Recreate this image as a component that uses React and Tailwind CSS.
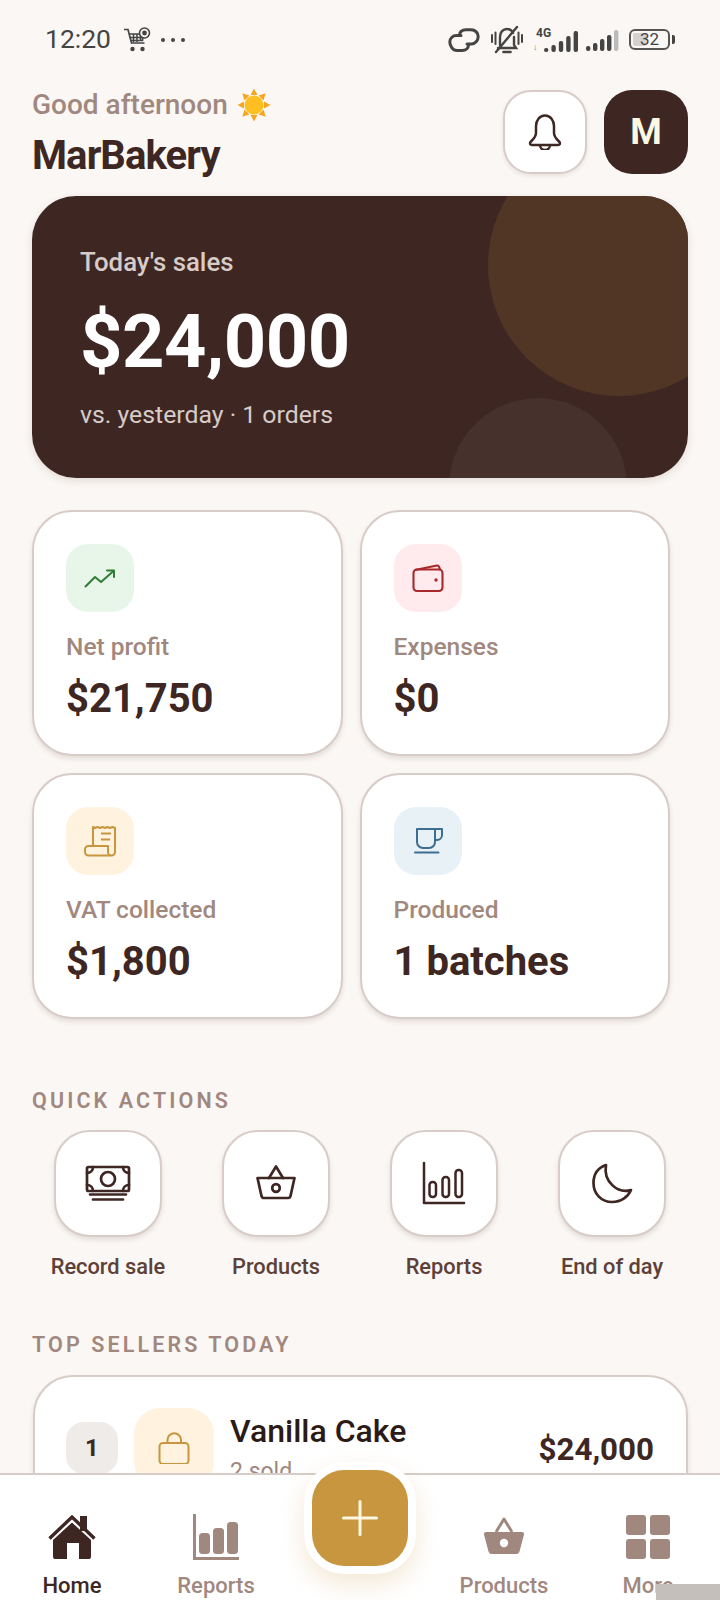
import React from "react";

const ink = "#3e2723";

function Sun() {
  const rays = [0, 45, 90, 135, 180, 225, 270, 315];
  return (
    <svg width="34" height="34" viewBox="0 0 34 34" className="shrink-0">
      {rays.map((r) => (
        <polygon key={r} points="17,0.5 20.5,7 13.5,7" fill="#f6a623" transform={`rotate(${r} 17 17)`} />
      ))}
      <circle cx="17" cy="17" r="9.5" fill="#fdbf22" />
    </svg>
  );
}

function Cart() {
  return (
    <svg width="28" height="26" viewBox="0 0 28 26" fill="none" stroke="#444" strokeWidth="1.7">
      <path d="M1 2.5H5L8.5 16H21.5" />
      <path d="M6 7H20L19.5 13.5H8" />
      <path d="M10.5 7V15M14 7V15M17.5 7V14M6.5 10.5H20" strokeWidth="1.5" />
      <circle cx="9.5" cy="22" r="2.2" fill="#444" stroke="none" />
      <circle cx="19.5" cy="22" r="2.2" fill="#444" stroke="none" />
      <circle cx="21.5" cy="6" r="5" fill="#fbf7f4" strokeWidth="1.6" />
      <circle cx="21.5" cy="6" r="2.4" fill="#444" stroke="none" />
    </svg>
  );
}

function LinkGlyph() {
  return (
    <svg width="32" height="24" viewBox="0 0 32 24" fill="none" stroke="#444" strokeWidth="3" strokeLinecap="round">
      <path d="M13 7.5H8.5C4.5 7.5 1.8 10.5 1.8 14S4.5 22.5 9 22.5H14C18 22.5 20.5 20 20.5 17" />
      <path d="M11.5 7C11.5 4 14 1.8 18 1.8H23C27.5 1.8 30.2 5 30.2 8.5S27.5 16 23.5 16H19" />
    </svg>
  );
}

function BellOff() {
  return (
    <svg width="34" height="30" viewBox="0 0 34 30" fill="none" stroke="#444" strokeWidth="2.4" strokeLinecap="round">
      <path d="M10 20V12C10 7 13 4 17 4C20 4 22 5.5 23 8M24 12V20L26 23H8" />
      <path d="M6 2L27 27" transform="translate(27 0) rotate(0) scale(-1 1) translate(-6 0)" />
      <path d="M13.5 27H20.5" strokeWidth="2.6" />
      <path d="M2 10V17M5.5 7.5V19M28.5 7.5V19M32 10V17" strokeWidth="2" />
    </svg>
  );
}

function Signal({ last = "#444" }) {
  const hs = [5, 8, 12, 16, 21];
  return (
    <svg width="33" height="22" viewBox="0 0 33 22">
      {hs.map((h, i) => (
        <rect key={h} x={i * 7} y={22 - h} width="4.4" height={h} rx="2" fill={i === 4 ? last : "#444"} />
      ))}
    </svg>
  );
}

function Battery() {
  return (
    <div className="flex items-center gap-[2px]">
      <div className="relative flex h-[21px] w-[41px] items-center justify-center overflow-hidden rounded-[6px] border-2 border-[#555]">
        <div className="absolute top-[2px] bottom-[2px] left-[2px] w-[13px] rounded-[2px] bg-[#d4d1cf]" />
        <span className="relative text-[17px] leading-none text-[#444]">32</span>
      </div>
      <div className="h-[9px] w-[3px] rounded-r-[2px] bg-[#444]" />
    </div>
  );
}

function StatusBar() {
  return (
    <div className="flex h-[78px] shrink-0 items-center pt-[1px] pl-[45px] pr-[45px]">
      <span className="text-[26.5px] leading-none text-[#444]">12:20</span>
      <div className="ml-[12px] flex h-[26px] items-center"><Cart /></div>
      <div className="ml-[10px] flex items-center gap-[6px]">
        <span className="h-[4px] w-[4px] rounded-full bg-[#444]" />
        <span className="h-[4px] w-[4px] rounded-full bg-[#444]" />
        <span className="h-[4px] w-[4px] rounded-full bg-[#444]" />
      </div>
      <div className="ml-auto flex items-center">
        <LinkGlyph />
        <div className="ml-[10px]"><BellOff /></div>
        <div className="relative ml-[9px] flex h-[24px] w-[46px] items-end justify-end">
          <span className="absolute top-[-1px] left-[3px] text-[12px] font-bold leading-none text-[#444]">4G</span>
          <div className="absolute bottom-[0px] left-[0px] text-[9px] font-bold leading-none text-[#888]">↓</div>
          <svg width="36" height="22" viewBox="0 0 36 22">
            {[4, 7, 11, 16, 21].map((h, i) => (
              <rect key={h} x={1 + i * 7.4} y={22 - h} width="4.4" height={h} rx="2" fill="#444" />
            ))}
          </svg>
        </div>
        <div className="ml-[7px]"><Signal last="#bbb" /></div>
        <div className="ml-[10px]"><Battery /></div>
      </div>
    </div>
  );
}

function Header() {
  return (
    <div className="flex h-[118px] shrink-0 items-start pl-[32px] pr-[32px] pt-[10px]">
      <div>
        <div className="flex h-[34px] items-center gap-[9px]">
          <span className="text-[28px] font-medium leading-none text-[#a1887f]">Good afternoon</span>
          <Sun />
        </div>
        <div className="mt-[10px] text-[40px] font-bold leading-[48px] tracking-[-0.9px] text-[#3e2723]">MarBakery</div>
      </div>
      <div className="ml-auto flex items-center gap-[17px] pt-[2px]">
        <div className="flex h-[84px] w-[84px] items-center justify-center rounded-[28px] border-2 border-[#d7ccc8] bg-white shadow-[0_2px_4px_rgba(62,39,35,0.1)]">
          <svg width="36" height="36" viewBox="0 0 36 36" fill="none" stroke={ink} strokeWidth="2.5" strokeLinejoin="round">
            <path d="M18 1.5C12.5 1.5 9 6.5 9 12V19C9 23 6 25.5 3.5 28C2.5 29.5 3 31 5 31H31C33 31 33.5 29.5 32.5 28C30 25.5 27 23 27 19V12C27 6.5 23.5 1.5 18 1.5Z" />
            <path d="M13 31A5 5 0 0 0 23 31" />
          </svg>
        </div>
        <div className="flex h-[84px] w-[84px] items-center justify-center rounded-[28px] bg-[#3e2723] text-[36px] font-bold leading-none text-[#fff8e1]">M</div>
      </div>
    </div>
  );
}

function Hero() {
  return (
    <div className="relative ml-[32px] h-[282px] w-[656px] shrink-0 overflow-hidden rounded-[44px] bg-[#3e2723] pl-[48px] pt-[50px] shadow-[0_3px_8px_rgba(62,39,35,0.12)]">
      <div className="absolute left-[456px] top-[-62px] h-[262px] w-[262px] rounded-full bg-[#513626]" />
      <div className="absolute left-[417px] top-[202px] h-[178px] w-[178px] rounded-full bg-[#46312c]" />
      <div className="relative text-[25.8px] font-medium leading-[32px] text-[#d7ccc8]">Today's sales</div>
      <div className="relative mt-[21px] text-[74px] font-bold leading-[86px] tracking-[-0.45px] text-white">$24,000</div>
      <div className="relative mt-[14px] text-[24.8px] leading-[32px] text-[#d7ccc8]">vs. yesterday · 1 orders</div>
    </div>
  );
}

function StatCard({ bg, label, value, icon }) {
  return (
    <div className="h-[246px] rounded-[40px] border-2 border-[#d7ccc8] bg-white pl-[32px] pt-[32px] shadow-[0_3px_5px_rgba(62,39,35,0.12)]">
      <div className={`flex h-[68px] w-[68px] items-center justify-center rounded-[22px] ${bg}`}>{icon}</div>
      <div className="mt-[19px] text-[24.5px] font-medium leading-[32px] text-[#a1887f]">{label}</div>
      <div className="mt-[10px] text-[40px] font-bold leading-[52px] text-[#3e2723]">{value}</div>
    </div>
  );
}

const TrendIcon = (
  <svg width="32" height="32" viewBox="0 0 32 32" fill="none" stroke="#2e7d32" strokeWidth="2" strokeLinecap="round" strokeLinejoin="round">
    <path d="M1.5 24.5L11 15L17 20L29.5 9" />
    <path d="M23 8.5H30V15" />
  </svg>
);
const WalletIcon = (
  <svg width="32" height="32" viewBox="0 0 32 32" fill="none" stroke="#a8282b" strokeWidth="2.1" strokeLinejoin="round">
    <rect x="1.5" y="7.5" width="29" height="21.5" rx="3.5" />
    <path d="M3 8L25 3.5C26.5 3.3 27.5 5 28 7.5" />
    <circle cx="24" cy="18" r="1.7" fill="#a8282b" stroke="none" />
  </svg>
);
const ReceiptIcon = (
  <svg width="32" height="32" viewBox="0 0 32 32" fill="none" stroke="#c8963e" strokeWidth="2" strokeLinejoin="round">
    <path d="M9 21V2L11 3L13.5 2L16 3L18.5 2L21 3L23.5 2L26 3L28.5 2L31 3V27A3.5 3.5 0 0 1 24 27V21H4.5A3.5 3.5 0 0 0 1 24.5V27A3.5 3.5 0 0 0 4.5 30.5H27.5" />
    <path d="M17 8.5H27M17 14.5H26" />
  </svg>
);
const CupIcon = (
  <svg width="32" height="32" viewBox="0 0 32 32" fill="none" stroke="#3c6e91" strokeWidth="2" strokeLinecap="round" strokeLinejoin="round">
    <path d="M5 4H23V17A6 6 0 0 1 17 23H11A6 6 0 0 1 5 17Z" />
    <path d="M23 4H30V10A5 5 0 0 1 25 15H23" />
    <path d="M3 27.5H26.5" />
  </svg>
);

function MoneyIcon() {
  return (
    <svg width="48" height="48" viewBox="0 0 48 48" fill="none" stroke={ink} strokeWidth="2.7" strokeLinecap="round" strokeLinejoin="round">
      <rect x="3" y="7" width="42" height="24" rx="1.5" />
      <circle cx="24" cy="19" r="7" />
      <path d="M3 13C6.5 13 9 10.5 9 7M45 13C41.5 13 39 10.5 39 7M3 25C6.5 25 9 27.5 9 31M45 25C41.5 25 39 27.5 39 31" />
      <path d="M6 34.5H42M9 39.5H39" />
    </svg>
  );
}
function BasketIcon() {
  return (
    <svg width="48" height="48" viewBox="0 0 48 48" fill="none" stroke={ink} strokeWidth="2.7" strokeLinecap="round" strokeLinejoin="round">
      <path d="M17 18L24 6.5L31 18" />
      <path d="M5.5 18H42.5L38.5 36A2.5 2.5 0 0 1 36 38H12A2.5 2.5 0 0 1 9.5 36Z" />
      <circle cx="24" cy="28" r="3.8" />
    </svg>
  );
}
function ChartIcon() {
  return (
    <svg width="48" height="48" viewBox="0 0 48 48" fill="none" stroke={ink} strokeWidth="2.5" strokeLinecap="round" strokeLinejoin="round">
      <path d="M4 3V43H44" />
      <rect x="9.5" y="22" width="6.5" height="15" rx="3" />
      <rect x="22.5" y="17" width="6.5" height="20" rx="3" />
      <rect x="35.5" y="10" width="6.5" height="27" rx="3" />
    </svg>
  );
}
function MoonIcon() {
  return (
    <svg width="48" height="48" viewBox="0 0 48 48" fill="none" stroke={ink} strokeWidth="2.7" strokeLinejoin="round">
      <path d="M18 5C9.5 8 5.5 15 5.5 23C5.5 34 13.5 42 24 42C33 42 40 37 43 30C30 34 15 22 18 5Z" />
    </svg>
  );
}

function QuickAction({ icon, label }) {
  return (
    <div className="flex flex-col items-center">
      <div className="flex h-[107px] w-[108px] items-center justify-center rounded-[36px] border-2 border-[#d7ccc8] bg-white shadow-[0_3px_5px_rgba(62,39,35,0.12)]">{icon}</div>
      <div className="mt-[15px] text-[21.8px] font-medium leading-[30px] text-[#5d4037]">{label}</div>
    </div>
  );
}

function SectionLabel({ children, className }) {
  return <div className={`ml-[32px] text-[21.5px] font-semibold leading-[30px] tracking-[3.1px] text-[#a1887f] ${className}`}>{children}</div>;
}

function TopSeller() {
  return (
    <div className="ml-[33px] mt-[15px] flex h-[200px] w-[655px] shrink-0 items-start rounded-[40px] border-2 border-[#d7ccc8] bg-white pl-[31px] pr-[32px] pt-[31px] shadow-[0_3px_5px_rgba(62,39,35,0.12)]">
      <div className="mt-[14px] flex h-[52px] w-[52px] items-center justify-center rounded-[18px] bg-[#efebe9] text-[24px] font-bold text-[#3e2723]">1</div>
      <div className="ml-[16px] flex h-[80px] w-[80px] items-center justify-center rounded-[26px] bg-[#fff3e0]">
        <svg width="32" height="32" viewBox="0 0 32 32" fill="none" stroke="#c8963e" strokeWidth="2" strokeLinejoin="round">
          <rect x="1.5" y="11" width="29" height="21" rx="3.5" />
          <path d="M9.5 11V8A6.75 6.75 0 0 1 23 8V11" />
        </svg>
      </div>
      <div className="ml-[16px] flex-1">
        <div className="mt-[4px] text-[32px] font-medium leading-[38px] text-[#2b1a16]">Vanilla Cake</div>
        <div className="mt-[7px] text-[23px] leading-[30px] text-[#a1887f]">2 sold</div>
      </div>
      <div className="mt-[23px] text-[31.3px] font-bold leading-[38px] text-[#3e2723]">$24,000</div>
    </div>
  );
}

function NavItem({ label, active, icon }) {
  return (
    <div className="flex flex-col items-center pt-[38px]">
      {icon}
      <div className={`mt-[10px] text-[22px] leading-[30px] font-medium ${active ? "text-[#3e2723]" : "text-[#a1887f]"}`}>{label}</div>
    </div>
  );
}

function BottomNav() {
  const c = "#a1887f";
  return (
    <div className="absolute bottom-0 left-0 grid h-[127px] w-[720px] grid-cols-5 border-t-2 border-[#d7ccc8] bg-white">
      <NavItem
        label="Home"
        active
        icon={
          <svg width="48" height="48" viewBox="0 0 48 48">
            <rect x="32" y="3" width="7" height="15" fill={ink} />
            <path d="M1.5 25.5L24 4L46.5 25.5" fill="none" stroke={ink} strokeWidth="3.4" />
            <path d="M24 9.5L43 27V44A2 2 0 0 1 41 46H31V30H19V46H7A2 2 0 0 1 5 44V27Z" fill={ink} />
          </svg>
        }
      />
      <NavItem
        label="Reports"
        icon={
          <svg width="48" height="48" viewBox="0 0 48 48" fill={c}>
            <path d="M2.5 1V45.5H47" fill="none" stroke={c} strokeWidth="3" />
            <rect x="7" y="20" width="11" height="21" rx="3.5" />
            <rect x="21" y="15" width="11" height="26" rx="3.5" />
            <rect x="35" y="9" width="11" height="32" rx="3.5" />
          </svg>
        }
      />
      <div />
      <NavItem
        label="Products"
        icon={
          <svg width="48" height="48" viewBox="0 0 48 48" fill={c}>
            <path d="M16 19L24 6L32 19" fill="none" stroke={c} strokeWidth="3" strokeLinejoin="round" />
            <path d="M6 19H42A2 2 0 0 1 44 21.5L39.5 38.5A3.5 3.5 0 0 1 36 41H12A3.5 3.5 0 0 1 8.5 38.5L4 21.5A2 2 0 0 1 6 19Z" />
            <circle cx="24" cy="30" r="4.2" fill="#fff" />
          </svg>
        }
      />
      <NavItem
        label="More"
        icon={
          <svg width="48" height="48" viewBox="0 0 48 48" fill={c}>
            <rect x="2" y="2" width="20" height="20" rx="3" />
            <rect x="26" y="2" width="20" height="20" rx="3" />
            <rect x="2" y="26" width="20" height="20" rx="3" />
            <rect x="26" y="26" width="20" height="20" rx="3" />
          </svg>
        }
      />
    </div>
  );
}

export default function App() {
  return (
    <div className="relative flex h-[1600px] w-[720px] flex-col overflow-hidden bg-[#fbf7f4] font-[Roboto,sans-serif]">
      <StatusBar />
      <Header />
      <Hero />
      <div className="ml-[32px] mt-[32px] grid w-[638px] shrink-0 grid-cols-2 gap-[17px]">
        <StatCard bg="bg-[#e8f5e9]" label="Net profit" value="$21,750" icon={TrendIcon} />
        <StatCard bg="bg-[#ffebee]" label="Expenses" value="$0" icon={WalletIcon} />
        <StatCard bg="bg-[#fff3e0]" label="VAT collected" value="$1,800" icon={ReceiptIcon} />
        <StatCard bg="bg-[#e8f1f6]" label="Produced" value="1 batches" icon={CupIcon} />
      </div>
      <SectionLabel className="mt-[67px]">QUICK ACTIONS</SectionLabel>
      <div className="ml-[24px] mt-[14px] grid w-[672px] shrink-0 grid-cols-4">
        <QuickAction icon={<MoneyIcon />} label="Record sale" />
        <QuickAction icon={<BasketIcon />} label="Products" />
        <QuickAction icon={<ChartIcon />} label="Reports" />
        <QuickAction icon={<MoonIcon />} label="End of day" />
      </div>
      <SectionLabel className="mt-[48px]">TOP SELLERS TODAY</SectionLabel>
      <TopSeller />
      <BottomNav />
      <div className="absolute left-[304px] top-[1462px] flex h-[112px] w-[112px] items-center justify-center rounded-[40px] bg-white shadow-[0_10px_24px_rgba(200,150,62,0.22)]">
        <div className="flex h-[96px] w-[96px] items-center justify-center rounded-[32px] bg-[#c8963e]">
          <svg width="36" height="36" viewBox="0 0 36 36" fill="none" stroke="#fff8e1" strokeWidth="3" strokeLinecap="round">
            <path d="M18 1.5V34.5M1.5 18H34.5" />
          </svg>
        </div>
      </div>
      <div className="absolute bottom-0 right-0 h-[16px] w-[64px] bg-[#c4bfbb]" />
    </div>
  );
}
